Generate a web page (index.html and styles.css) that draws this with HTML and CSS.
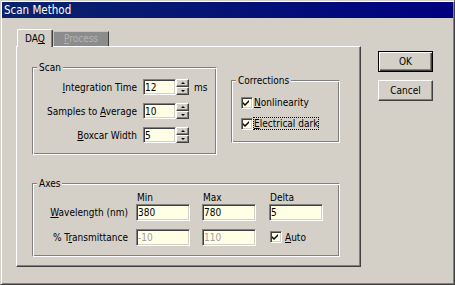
FILE: index.html
```html
<!DOCTYPE html>
<html lang="en">
<head>
    <meta charset="UTF-8">
    <title>Scan Method</title>
    <link rel="stylesheet" href="styles.css">
</head>
<body>
    <div class="window">
        <div class="titlebar">Scan Method</div>
        <div class="client">
            <div class="tabctl">
                <div class="tabstrip">
                    <div class="tab active">DA<u>Q</u></div>
                    <div class="tab disabled"><u>P</u>rocess</div>
                </div>
                <div class="tabpage">
                    <div class="group scan">
                        <span class="group-title">Scan</span>
                        <div class="row">
                            <label class="lbl"><u>I</u>ntegration Time</label>
                            <input class="field small" value="12">
                            <span class="spin"><span class="spin-btn"><i class="arrow up"></i></span><span class="spin-btn"><i class="arrow down"></i></span></span>
                            <span class="unit">ms</span>
                        </div>
                        <div class="row">
                            <label class="lbl">Samples to <u>A</u>verage</label>
                            <input class="field small" value="10">
                            <span class="spin"><span class="spin-btn"><i class="arrow up"></i></span><span class="spin-btn"><i class="arrow down"></i></span></span>
                        </div>
                        <div class="row">
                            <label class="lbl"><u>B</u>oxcar Width</label>
                            <input class="field small" value="5">
                            <span class="spin"><span class="spin-btn"><i class="arrow up"></i></span><span class="spin-btn"><i class="arrow down"></i></span></span>
                        </div>
                    </div>

                    <div class="group corrections">
                        <span class="group-title">Corrections</span>
                        <div class="check-row">
                            <span class="check"><svg width="8" height="8" viewBox="0 0 8 8"><polygon points="0,3 2,5 6,1 6,3 2,7 0,5" fill="#000"/></svg></span>
                            <span class="check-label"><u>N</u>onlinearity</span>
                        </div>
                        <div class="check-row">
                            <span class="check"><svg width="8" height="8" viewBox="0 0 8 8"><polygon points="0,3 2,5 6,1 6,3 2,7 0,5" fill="#000"/></svg></span>
                            <span class="check-label focused"><u>E</u>lectrical dark</span>
                        </div>
                    </div>

                    <div class="group axes">
                        <span class="group-title">Axes</span>
                        <span></span>
                        <span class="col-head">Min</span>
                        <span class="col-head">Max</span>
                        <span class="col-head">Delta</span>

                        <label class="axis-lbl"><u>W</u>avelength (nm)</label>
                        <input class="field wide" value="380">
                        <input class="field wide" value="780">
                        <input class="field wide" value="5">

                        <label class="axis-lbl">% T<u>r</u>ansmittance</label>
                        <input class="field wide" value="-10" disabled>
                        <input class="field wide" value="110" disabled>
                        <div class="auto">
                            <span class="check"><svg width="8" height="8" viewBox="0 0 8 8"><polygon points="0,3 2,5 6,1 6,3 2,7 0,5" fill="#000"/></svg></span>
                            <span class="check-label"><u>A</u>uto</span>
                        </div>
                    </div>
                </div>
            </div>

            <div class="buttons">
                <button class="btn default">OK</button>
                <button class="btn">Cancel</button>
            </div>
        </div>
    </div>
</body>
</html>
```

FILE: styles.css
```css
* {
    box-sizing: border-box;
}

html, body {
    margin: 0;
}

body {
    font-family: "DejaVu Sans Condensed", "DejaVu Sans", sans-serif;
    font-size: 10px;
    color: #000;
    background: #d4d0c8;
}

.window {
    width: 455px;
    height: 285px;
    padding: 1px;
    background: #d4d0c8;
    border: 1px solid;
    border-color: #d4d0c8 #404040 #404040 #d4d0c8;
    box-shadow: inset 1px 1px #fff, inset -1px -1px #808080;
}

.titlebar {
    height: 16px;
    line-height: 16px;
    padding-left: 2px;
    color: #fff;
    font-size: 11.5px;
    background: linear-gradient(to right, #0a246a, #000080);
}

.client {
    display: flex;
    align-items: flex-start;
    padding: 11px 0 0 14px;
}

/* tabs */
.tabctl {
    width: 345px;
}

.tabstrip {
    display: flex;
    align-items: flex-end;
    height: 18px;
    padding-left: 1px;
    margin-bottom: -1px;
    position: relative;
    z-index: 1;
}

.tab {
    text-align: center;
    border: 1px solid;
    border-bottom: 0;
}

.tab.active {
    width: 36px;
    height: 18px;
    line-height: 17px;
    background: #d4d0c8;
    border-color: #fff #404040 #fff #fff;
    box-shadow: inset -1px 0 #808080;
    border-radius: 2px 2px 0 0;
}

.tab.disabled {
    width: 56px;
    height: 15px;
    line-height: 14px;
    margin-bottom: 1px;
    background: #8c8c8c;
    color: #b4b4b4;
    border-color: #c4c4c4 #404040 #c4c4c4 #c4c4c4;
}

.tabpage {
    height: 221px;
    padding: 20px 0 0 15px;
    background: #d4d0c8;
    border: 1px solid;
    border-color: #fff #404040 #404040 #fff;
    box-shadow: inset -1px -1px #808080;
    display: grid;
    grid-template-columns: 185px 109px;
    column-gap: 14px;
    row-gap: 18px;
    align-items: start;
}

/* group boxes */
.group {
    position: relative;
    border: 1px solid;
    border-color: #808080 #fff #fff #808080;
    box-shadow: inset 1px 1px #fff, inset -1px -1px #808080;
}

.group-title {
    position: absolute;
    top: -7px;
    left: 4px;
    padding: 0 2px;
    line-height: 13px;
    background: #d4d0c8;
}

.scan {
    height: 88px;
    padding-top: 11px;
    display: flex;
    flex-direction: column;
    gap: 8px;
}

.row {
    display: flex;
    align-items: center;
    height: 16px;
}

.lbl {
    width: 104px;
    margin-right: 6px;
    text-align: right;
    white-space: nowrap;
}

.field {
    font: inherit;
    color: #000;
    padding: 0 1px;
    background: #ffffe6;
    border: 1px solid;
    border-color: #808080 #fff #fff #808080;
    box-shadow: inset 1px 1px #404040, inset -1px -1px #d4d0c8;
    outline: none;
    border-radius: 0;
}

.field:disabled {
    color: #a0a0a0;
    background: #ffffe6;
}

.field.small {
    width: 33px;
    height: 16px;
}

.field.wide {
    width: 54px;
    height: 17px;
}

.spin {
    display: flex;
    flex-direction: column;
    width: 13px;
    height: 16px;
}

.spin-btn {
    height: 8px;
    display: flex;
    justify-content: center;
    align-items: center;
    background: #d4d0c8;
    border: 1px solid;
    border-color: #fff #404040 #404040 #fff;
    box-shadow: inset -1px -1px #808080;
}

.arrow {
    width: 0;
    height: 0;
    border-left: 2px solid transparent;
    border-right: 2px solid transparent;
}

.arrow.up {
    border-bottom: 2px solid #000;
}

.arrow.down {
    border-top: 2px solid #000;
}

.unit {
    margin-left: 5px;
}

/* checkboxes */
.corrections {
    margin-top: 13px;
    height: 63px;
    padding: 15px 0 0 9px;
    display: flex;
    flex-direction: column;
    gap: 8px;
}

.check-row {
    display: flex;
    align-items: center;
    height: 13px;
}

.check {
    width: 12px;
    height: 12px;
    display: flex;
    justify-content: center;
    align-items: center;
    background: #ffffe6;
    border: 1px solid;
    border-color: #808080 #fff #fff #808080;
    box-shadow: inset 1px 1px #404040, inset -1px -1px #d4d0c8;
}

.check-label {
    padding: 0 1px;
    line-height: 13px;
    white-space: nowrap;
}

.check-label.focused {
    outline: 1px dotted #000;
    outline-offset: -1px;
}

/* axes */
.axes {
    grid-column: 1 / span 2;
    height: 74px;
    padding-top: 7px;
    display: grid;
    grid-template-columns: 103px 66px 67px 54px;
    grid-template-rows: 13px 25px 17px;
    align-items: start;
}

.col-head {
    line-height: 13px;
    padding-left: 1px;
}

.axis-lbl {
    line-height: 17px;
    padding-right: 8px;
    text-align: right;
    white-space: nowrap;
}

.auto {
    display: flex;
    align-items: center;
    height: 17px;
    padding-left: 1px;
}

.auto .check-label {
    padding-left: 3px;
}

/* dialog buttons */
.buttons {
    margin: 22px 0 0 17px;
    display: flex;
    flex-direction: column;
    gap: 8px;
}

.btn {
    width: 55px;
    height: 21px;
    padding: 0;
    font: inherit;
    color: #000;
    background: #d4d0c8;
    border: 1px solid;
    border-color: #fff #404040 #404040 #fff;
    box-shadow: inset -1px -1px #808080;
    border-radius: 0;
}

.btn.default {
    border-color: #000;
    box-shadow: inset 1px 1px #fff, inset -1px -1px #404040, inset -2px -2px #808080;
}
```
